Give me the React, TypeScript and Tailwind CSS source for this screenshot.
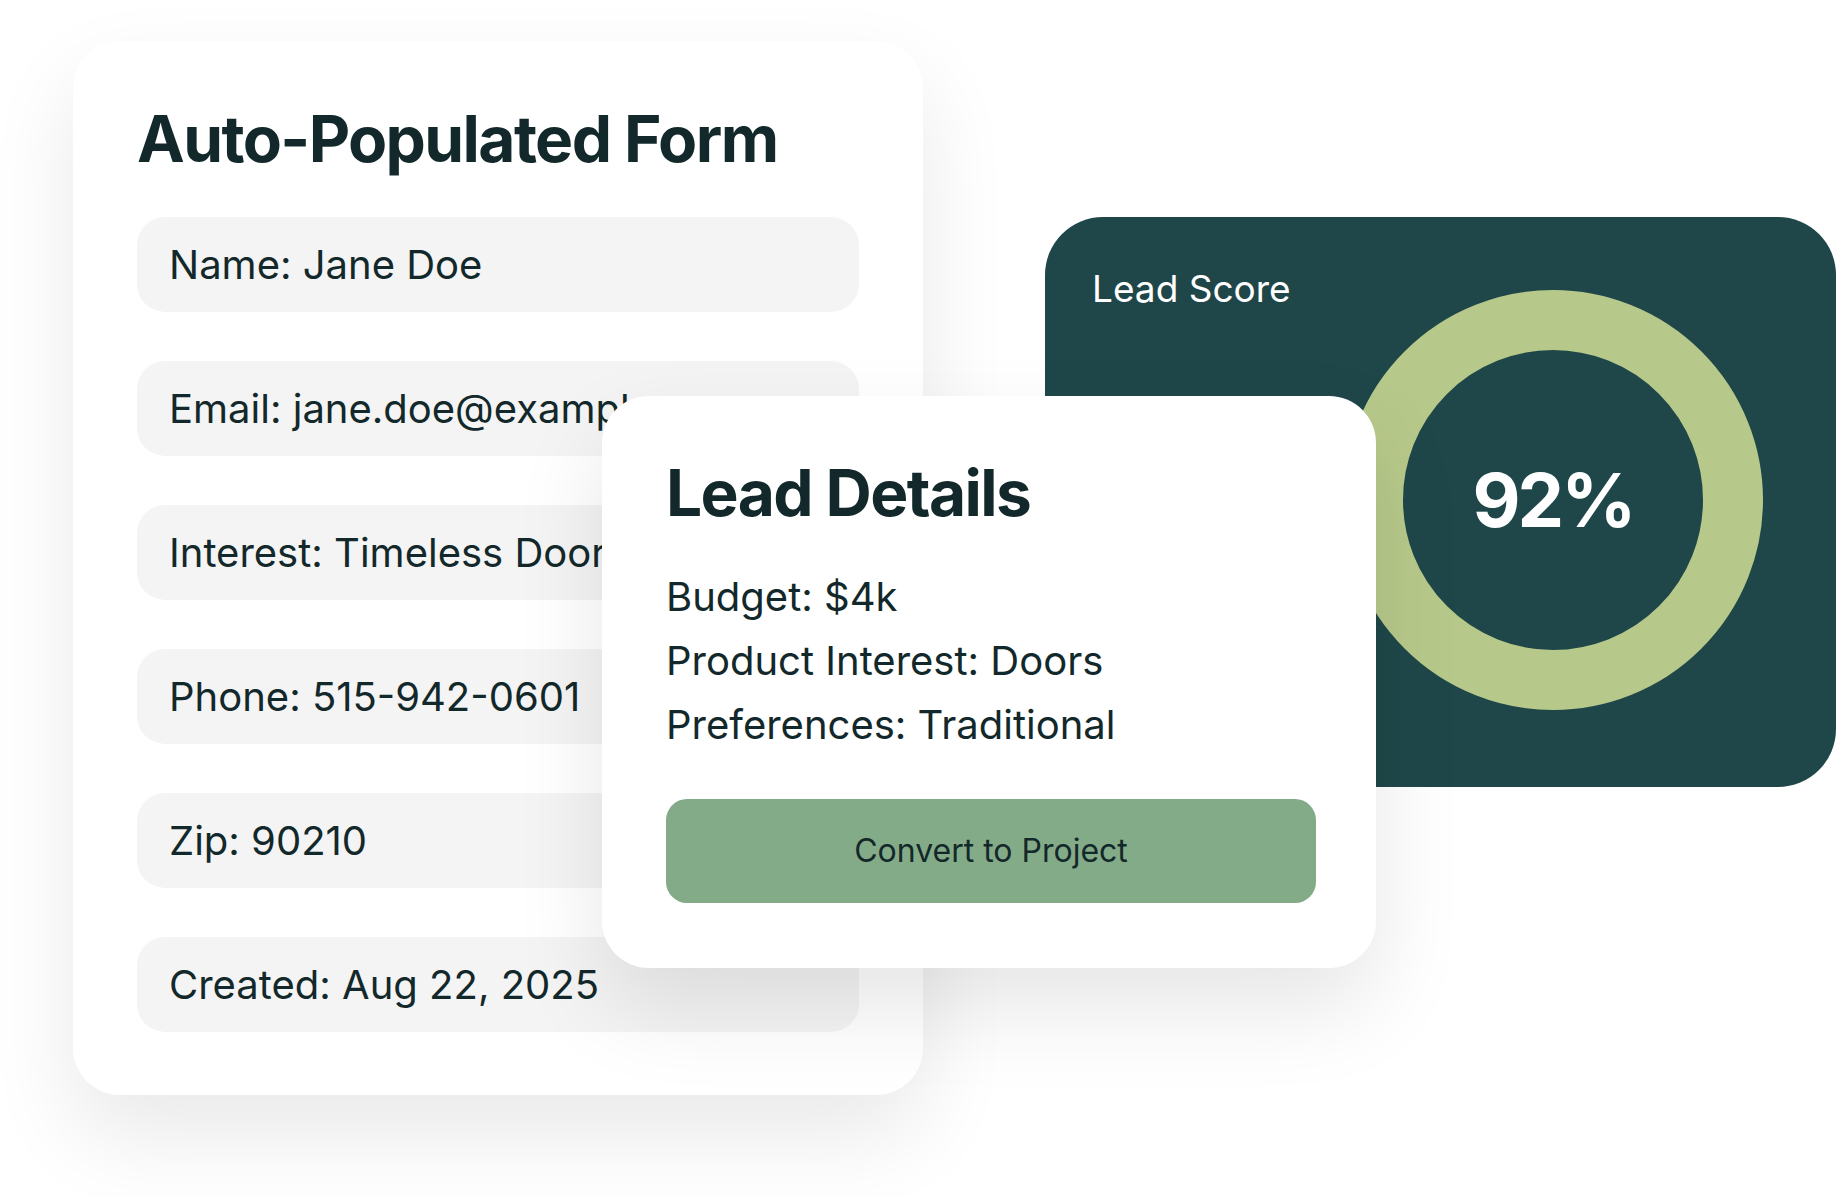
const fields = [
  "Name: Jane Doe",
  "Email: jane.doe@example.com",
  "Interest: Timeless Doors",
  "Phone: 515-942-0601",
  "Zip: 90210",
  "Created: Aug 22, 2025",
];

const details = ["Budget: $4k", "Product Interest: Doors", "Preferences: Traditional"];

function Donut() {
  return (
    <svg width="420" height="420" viewBox="0 0 420 420">
      <circle cx="210" cy="210" r="180" fill="none" stroke="#b7c98a" strokeWidth="60" />
    </svg>
  );
}

export default function App() {
  return (
    <div className="relative w-[1836px] h-[1197px] overflow-hidden bg-white font-['Inter',sans-serif] text-[#13282a]">
      {/* form card */}
      <div className="ml-[73px] mt-[41px] w-[850px] h-[1054px] rounded-[47px] bg-white px-[64px] pt-[66px] shadow-[0_40px_90px_rgba(0,0,0,0.09)]">
        <h1 className="text-[64px] leading-none font-bold tracking-[-0.025em]">Auto-Populated Form</h1>
        <div className="mt-[46px] flex flex-col gap-[49px]">
          {fields.map((f) => (
            <div key={f} className="h-[95px] rounded-[28px] bg-[#f4f4f4] pl-[32px] flex items-center text-[40px] whitespace-nowrap overflow-hidden">
              {f}
            </div>
          ))}
        </div>
      </div>

      {/* lead score */}
      <div className="absolute left-[1045px] top-[217px] w-[791px] h-[570px] rounded-[58px] bg-[#1f4749] pl-[47px] pt-[51px]">
        <div className="text-[37px] leading-[42px] text-white">Lead Score</div>
        <div className="absolute left-[298px] top-[73px] w-[420px] h-[420px]">
          <Donut />
          <div className="absolute inset-0 flex items-center justify-center text-[74px] font-bold text-white tracking-[-0.04em]">
            92%
          </div>
        </div>
      </div>

      {/* lead details */}
      <div className="absolute left-[602px] top-[396px] w-[774px] h-[572px] rounded-[47px] bg-white pl-[64px] pr-[60px] pt-[65px] shadow-[0_40px_90px_rgba(0,0,0,0.1)]">
        <h2 className="text-[64px] leading-none font-bold tracking-[-0.025em]">Lead Details</h2>
        <div className="mt-[40px] flex flex-col">
          {details.map((d) => (
            <div key={d} className="text-[40px] leading-[64px]">
              {d}
            </div>
          ))}
        </div>
        <button className="mt-[42px] w-full h-[104px] rounded-[21px] bg-[#84ab88] text-[32px] text-[#13282a] flex items-center justify-center">
          Convert to Project
        </button>
      </div>
    </div>
  );
}
